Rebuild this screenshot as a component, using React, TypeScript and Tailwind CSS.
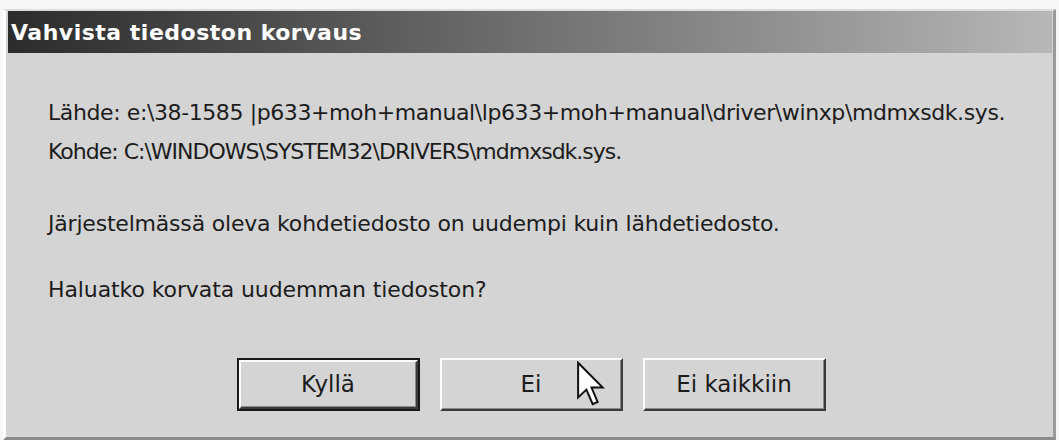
import React from "react"

const font = { fontFamily: '"DejaVu Sans", Tahoma, sans-serif' }

function Button({ label, isDefault }: { label: string; isDefault?: boolean }) {
  return (
    <div className={`w-[183px] h-[53px] ${isDefault ? "border-[2px] border-[#1a1a1a]" : ""}`}>
      <div className="w-full h-full border-t-[2px] border-l-[2px] border-t-[#fbfbfb] border-l-[#fbfbfb] border-b-[2px] border-r-[2px] border-b-[#3a3a3a] border-r-[#3a3a3a]">
        <div className="w-full h-full flex items-center justify-center border-b-[1px] border-r-[1px] border-b-[#8a8a8a] border-r-[#8a8a8a] text-[23px] text-[#1c1c1c] tracking-[0px]">
          {label}
        </div>
      </div>
    </div>
  )
}

function Cursor() {
  return (
    <svg width="28" height="46" viewBox="0 0 12.5 20" className="absolute left-[577px] top-[361px]">
      <path
        d="M0.5 0.5 L0.5 16 L4.2 12.5 L7 19 L9.2 18 L6.5 11.6 L11.5 11.6 Z"
        fill="#ffffff"
        stroke="#111111"
        strokeWidth="0.9"
        strokeLinejoin="miter"
      />
    </svg>
  )
}

export default function App() {
  return (
    <div className="relative w-[1059px] h-[440px] bg-[#f6f6f6] pt-[9px] pl-[3px] pr-[3px]" style={font}>
      <div className="h-[431px] border-t-[2px] border-t-[#dcdcdc] border-l-[3px] border-l-[#ffffff] border-r-[3px] border-r-[#9a9a9a] border-b-[3px] border-b-[#8c8c8c] bg-[#d4d4d4] flex flex-col">
        <div className="h-[42px] ml-[2px] mr-[1px] bg-gradient-to-r from-[#2c2c2c] via-[#707070] to-[#b7b7b7] flex items-center pl-[3px]">
          <span className="text-white font-bold text-[22px] tracking-[0.5px]">Vahvista tiedoston korvaus</span>
        </div>
        <div className="flex flex-col pl-[42px] pt-[47px] text-[#1c1c1c] text-[22px] leading-[26px]">
          <p className="tracking-[-0.4px]">Lähde: e:\38-1585 |p633+moh+manual\lp633+moh+manual\driver\winxp\mdmxsdk.sys.</p>
          <p className="mt-[13px] tracking-[-1px]">Kohde: C:\WINDOWS\SYSTEM32\DRIVERS\mdmxsdk.sys.</p>
          <p className="mt-[46px] tracking-[-0.2px]">Järjestelmässä oleva kohdetiedosto on uudempi kuin lähdetiedosto.</p>
          <p className="mt-[40px] tracking-[-0.1px]">Haluatko korvata uudemman tiedoston?</p>
          <div className="flex gap-[20px] mt-[55px] ml-[189px]">
            <Button label="Kyllä" isDefault />
            <Button label="Ei" />
            <Button label="Ei kaikkiin" />
          </div>
        </div>
      </div>
      <Cursor />
    </div>
  )
}
